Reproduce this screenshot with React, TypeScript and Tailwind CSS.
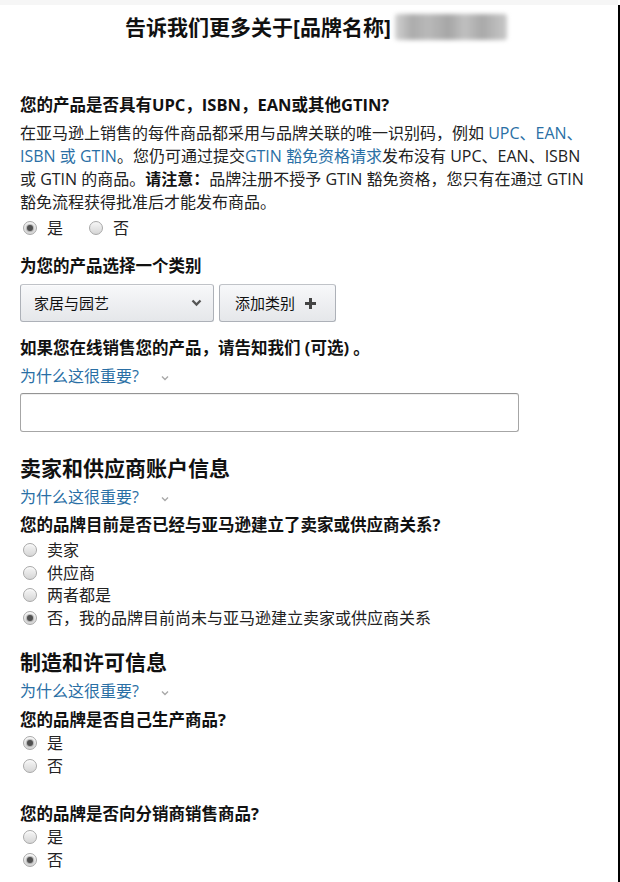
import React from "react";

const FONT = "font-['Open_Sans','Noto_Sans_CJK_SC',sans-serif]";

function Radio({ label, checked = false }: { label: string; checked?: boolean }) {
  return (
    <div className="flex h-[23px] items-center">
      <span className="ml-[3px] flex h-[14px] w-[14px] items-center justify-center rounded-full border border-[#a8a8a8] bg-gradient-to-b from-[#f6f6f6] to-[#d6d6d6] shadow-[inset_0_1px_1px_rgba(255,255,255,0.8)]">
        {checked && <span className="h-[6px] w-[6px] rounded-full bg-[#505050] shadow-[0_0_1px_1px_rgba(80,80,80,0.35)]" />}
      </span>
      <span className="ml-[10px] text-[16px] text-[#222]">{label}</span>
    </div>
  );
}

function InlineRadio({ label, checked = false, className = "" }: { label: string; checked?: boolean; className?: string }) {
  return (
    <div className={"flex h-[23px] items-center " + className}>
      <span className="flex h-[14px] w-[14px] items-center justify-center rounded-full border border-[#a8a8a8] bg-gradient-to-b from-[#f6f6f6] to-[#d6d6d6]">
        {checked && <span className="h-[6px] w-[6px] rounded-full bg-[#505050] shadow-[0_0_1px_1px_rgba(80,80,80,0.35)]" />}
      </span>
      <span className="ml-[10px] text-[16px] text-[#222]">{label}</span>
    </div>
  );
}

function Why({ className = "" }: { className?: string }) {
  return (
    <div className={"flex h-[23px] items-center leading-[23px] " + className}>
      <span className="text-[16px] text-[#2a6fa5]">为什么这很重要?</span>
      <svg className="ml-[22px] mt-[2px]" width="8" height="6" viewBox="0 0 8 6">
        <polyline points="1,1.5 4,4.5 7,1.5" fill="none" stroke="#a9a9a9" strokeWidth="1.4" />
      </svg>
    </div>
  );
}

function Question({ children, className = "" }: { children: React.ReactNode; className?: string }) {
  return <div className={"h-[23px] text-[16.5px] font-bold leading-[23px] text-[#111] " + className}>{children}</div>;
}

function Heading({ children, className = "" }: { children: React.ReactNode; className?: string }) {
  return <div className={"h-[28px] text-[21px] font-bold leading-[28px] text-[#111] " + className}>{children}</div>;
}

export default function App() {
  const link = "text-[#2a6fa5]";
  return (
    <div className={"flex min-h-[882px] w-[620px] bg-white " + FONT}>
      <div className="flex-1">
        <div className="h-[5px] bg-[#f6f6f6]" />
        <div className="mt-[7px] flex h-[30px] items-center pl-[125px]">
          <span className="text-[21px] font-bold leading-[30px] text-[#111]">告诉我们更多关于[品牌名称]</span>
          <div className="ml-[4px] h-[26px] w-[112px] rounded-[3px] bg-[linear-gradient(90deg,#d2d2d2,#acacac_15%,#b9b9b9_30%,#a6a6a6_48%,#c0c0c0_62%,#a9a9a9_78%,#c8c8c8)] blur-[2px]" />
        </div>

        <div className="pl-[20px]">
          <Question className="mt-[51px]">您的产品是否具有UPC，ISBN，EAN或其他GTIN?</Question>
          <div className="mt-[6px] whitespace-nowrap text-[16px] leading-[23px] text-[#222]">
            <div>
              在亚马逊上销售的每件商品都采用与品牌关联的唯一识别码，例如 <span className={link}>UPC、EAN、</span>
            </div>
            <div>
              <span className={link}>ISBN 或 GTIN</span>。您仍可通过提交<span className={link}>GTIN 豁免资格请求</span>发布没有 UPC、EAN、ISBN
            </div>
            <div>
              或 GTIN 的商品。<span className="font-bold text-[#111]">请注意：</span>品牌注册不授予 GTIN 豁免资格，您只有在通过 GTIN
            </div>
            <div>豁免流程获得批准后才能发布商品。</div>
          </div>
          <div className="mt-[2px] flex">
            <InlineRadio label="是" checked className="ml-[3px]" />
            <InlineRadio label="否" className="ml-[26px]" />
          </div>

          <Question className="mt-[15px]">为您的产品选择一个类别</Question>
          <div className="mt-[7px] flex gap-[5px]">
            <div className="flex h-[38px] w-[194px] items-center justify-between rounded-[3px] border border-[#adb1b8] border-t-[#c0c3c8] bg-gradient-to-b from-[#f7f8fa] to-[#e5e7ea] pl-[13px] pr-[11px] shadow-[0_1px_0_rgba(255,255,255,0.6)_inset]">
              <span className="text-[15px] text-[#111]">家居与园艺</span>
              <svg width="11" height="8" viewBox="0 0 11 8">
                <polyline points="1.5,1.5 5.5,5.5 9.5,1.5" fill="none" stroke="#555" strokeWidth="2.3" />
              </svg>
            </div>
            <div className="flex h-[38px] w-[117px] items-center rounded-[3px] border border-[#adb1b8] border-t-[#c0c3c8] bg-gradient-to-b from-[#f7f8fa] to-[#e5e7ea] pl-[15px]">
              <span className="text-[15px] text-[#111]">添加类别</span>
              <svg className="ml-[10px]" width="11" height="11" viewBox="0 0 11 11">
                <rect x="4" y="0" width="3" height="11" fill="#444" />
                <rect x="0" y="4" width="11" height="3" fill="#444" />
              </svg>
            </div>
          </div>

          <Question className="mt-[14px]">如果您在线销售您的产品，请告知我们 (可选) 。</Question>
          <Why className="mt-[6px]" />
          <div className="mt-[5px] h-[39px] w-[499px] rounded-[3px] border border-[#a6a6a6] border-t-[#949494] bg-white shadow-[inset_0_1px_0_rgba(0,0,0,0.06)]" />

          <Heading className="mt-[22px]">卖家和供应商账户信息</Heading>
          <Why className="mt-[4px]" />
          <Question className="mt-[4px]">您的品牌目前是否已经与亚马逊建立了卖家或供应商关系?</Question>
          <div className="mt-[3px] flex flex-col [&>div]:h-[22.5px]">
            <Radio label="卖家" />
            <Radio label="供应商" />
            <Radio label="两者都是" />
            <Radio label="否，我的品牌目前尚未与亚马逊建立卖家或供应商关系" checked />
          </div>

          <Heading className="mt-[19px]">制造和许可信息</Heading>
          <Why className="mt-[4px]" />
          <Question className="mt-[5px]">您的品牌是否自己生产商品?</Question>
          <div className="flex flex-col">
            <Radio label="是" checked />
            <Radio label="否" />
          </div>

          <Question className="mt-[25px]">您的品牌是否向分销商销售商品?</Question>
          <div className="flex flex-col">
            <Radio label="是" />
            <Radio label="否" checked />
          </div>
        </div>
      </div>
      <div className="mt-[5px] w-[2px] bg-black" />
    </div>
  );
}
